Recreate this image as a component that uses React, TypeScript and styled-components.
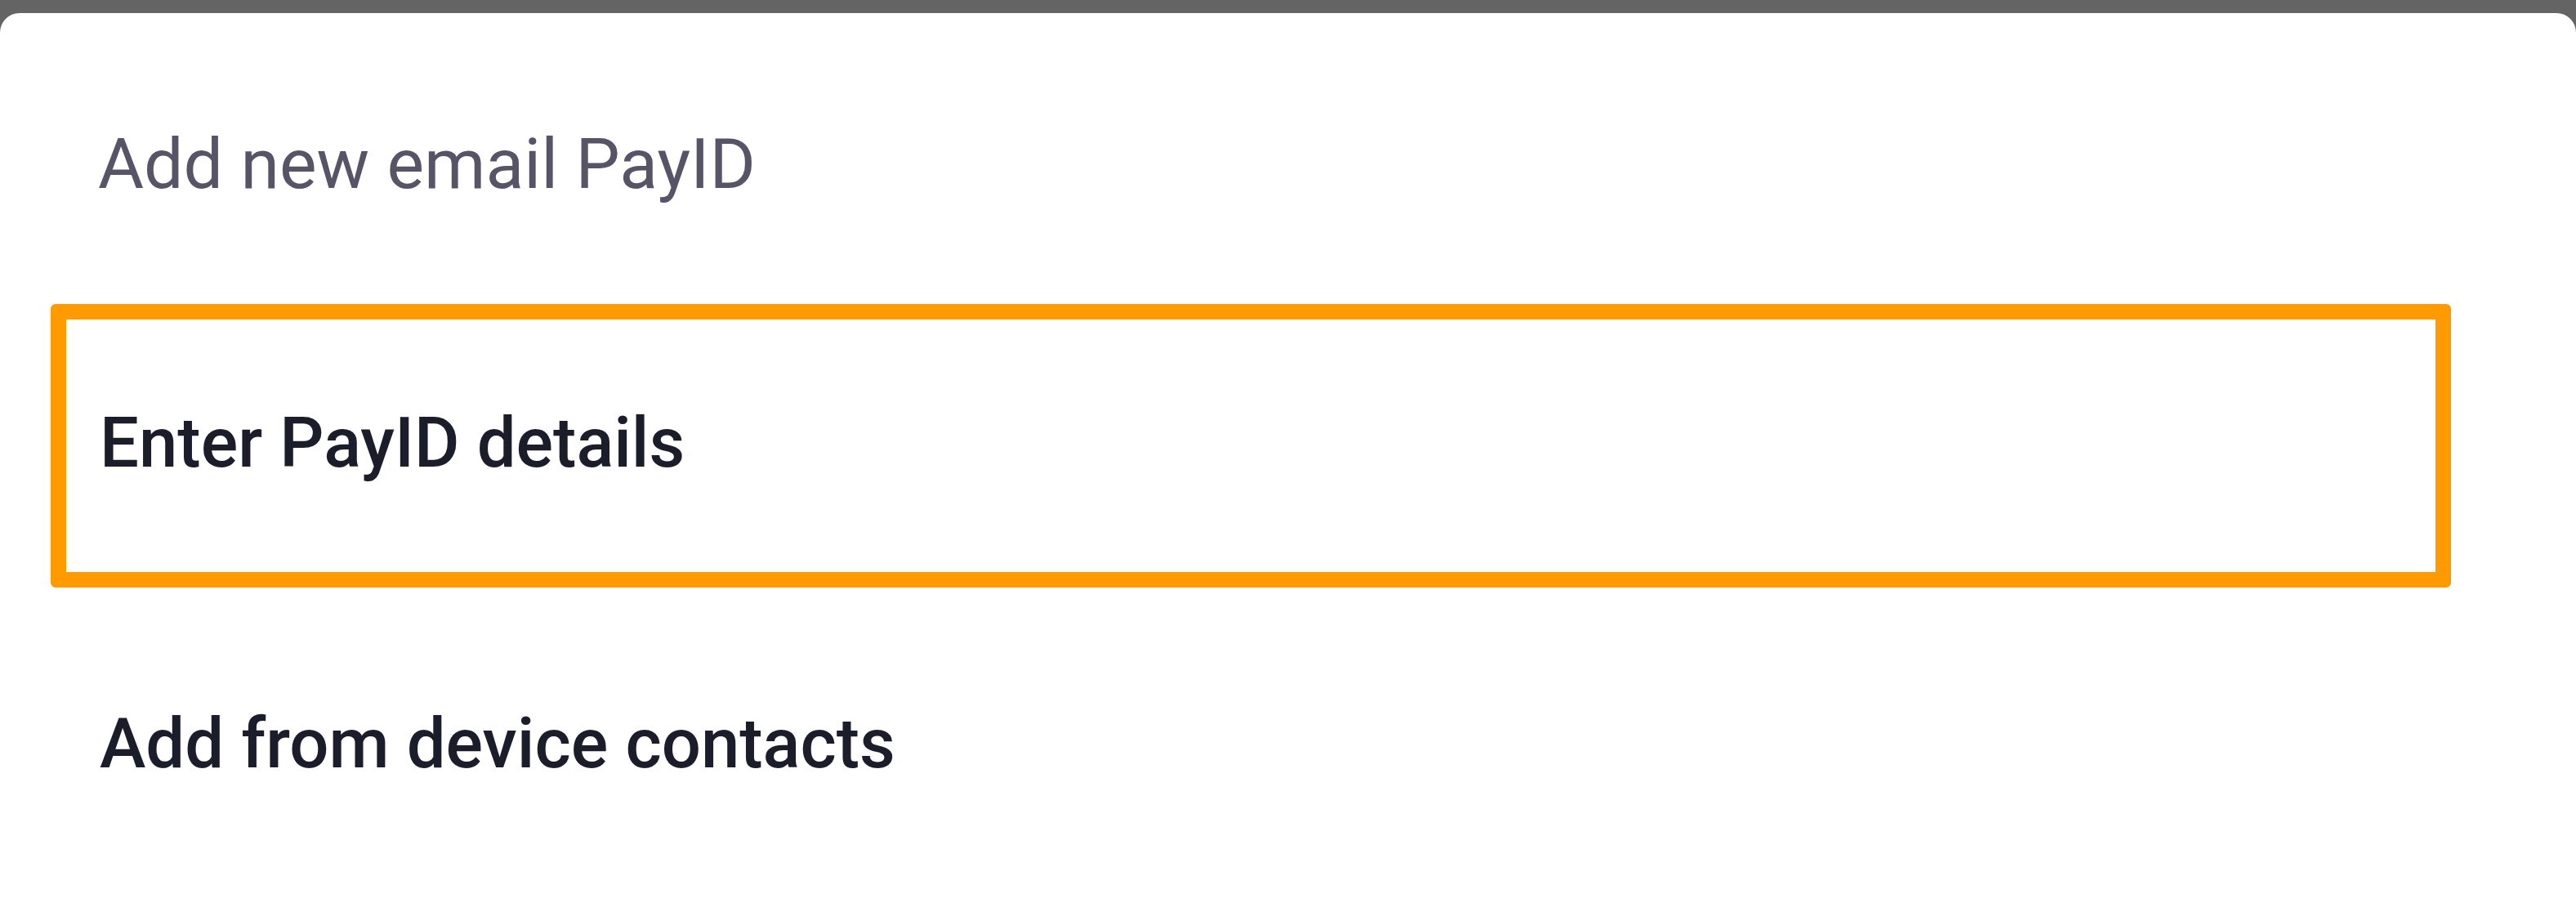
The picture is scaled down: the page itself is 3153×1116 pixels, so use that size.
import React from "react";
import styled, { createGlobalStyle } from "styled-components";

const GlobalStyle = createGlobalStyle`
  html, body {
    margin: 0;
    padding: 0;
    background: #646464;
    overflow: hidden;
  }
  body {
    font-family: Roboto, "Liberation Sans", Arial, sans-serif;
  }
`;

const Screen = styled.div`
  width: 3153px;
  height: 1116px;
  padding-top: 16px;
  box-sizing: border-box;
  background: #646464;
  display: flex;
  flex-direction: column;
`;

const Sheet = styled.div`
  flex: 1;
  background: #ffffff;
  border-radius: 24px 24px 0 0;
  display: flex;
  flex-direction: column;
`;

const Title = styled.h1`
  margin: 142px 0 0 120px;
  font-family: Roboto, "Liberation Sans", Arial, sans-serif;
  font-size: 86px;
  line-height: 86px;
  font-weight: 400;
  color: #575468;
`;

const OptionList = styled.ul`
  list-style: none;
  margin: 128px 0 0 62px;
  padding: 0;
  width: 2938px;
  display: flex;
  flex-direction: column;
  gap: 18px;
`;

const Option = styled.li<{ $focused?: boolean }>`
  height: 347px;
  box-sizing: border-box;
  border: 19px solid ${(p) => (p.$focused ? "#ff9a00" : "transparent")};
  border-radius: 6px;
  padding: 0 0 ${(p) => (p.$focused ? "6px" : "0")} 41px;
  display: flex;
  align-items: center;
  font-family: Roboto, "Liberation Sans", Arial, sans-serif;
  font-size: 85px;
  line-height: 85px;
  font-weight: 500;
  color: #1c1d2a;
`;

export default function App() {
  return (
    <>
      <GlobalStyle />
      <Screen>
        <Sheet>
          <Title>Add new email PayID</Title>
          <OptionList>
            <Option $focused>Enter PayID details</Option>
            <Option>Add from device contacts</Option>
          </OptionList>
        </Sheet>
      </Screen>
    </>
  );
}
